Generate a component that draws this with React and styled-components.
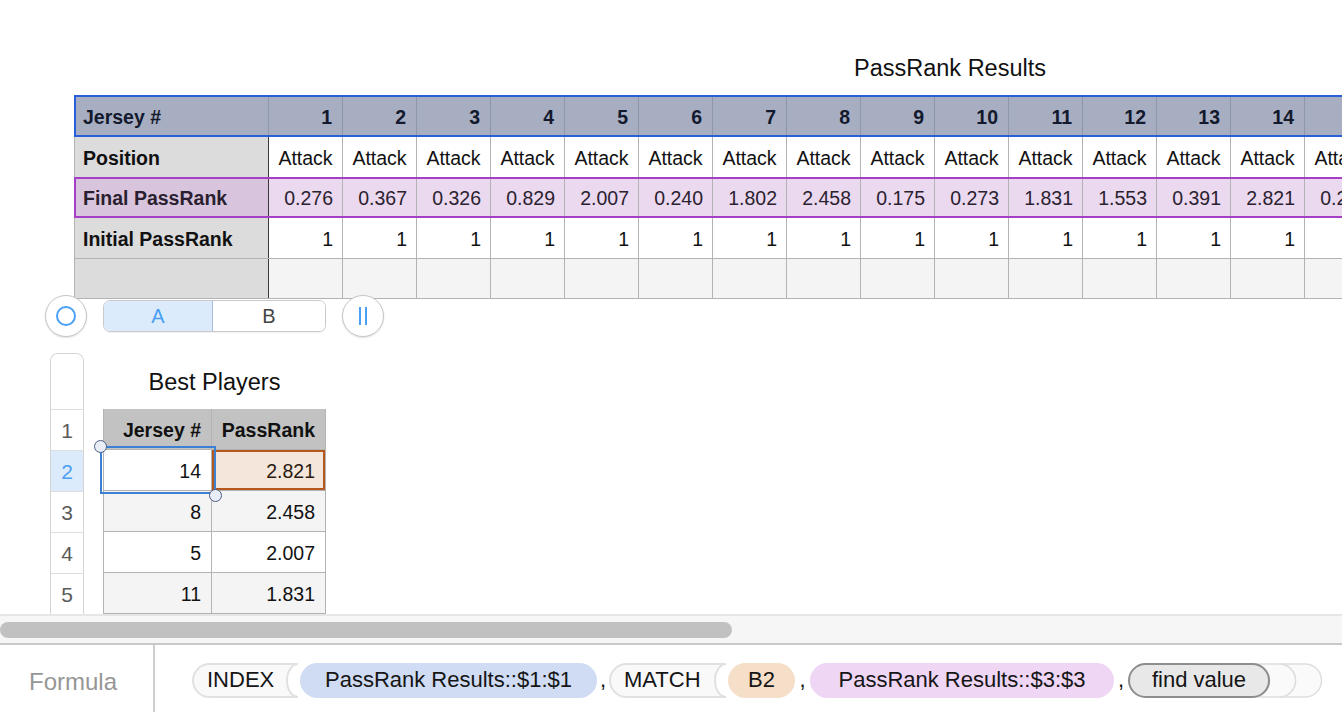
import React from "react";
import styled, { createGlobalStyle } from "styled-components";

const GlobalStyle = createGlobalStyle`
  html, body {
    margin: 0;
    padding: 0;
    background: #fff;
  }
  body {
    font-family: "Liberation Sans", Arial, sans-serif;
    color: #111;
    overflow: hidden;
  }
`;

const Page = styled.div`
  width: 1342px;
  height: 712px;
  display: flex;
  flex-direction: column;
  overflow: hidden;
`;

const Canvas = styled.div`
  height: 614px;
  flex-shrink: 0;
  overflow: hidden;
`;

const ResultsBlock = styled.section`
  padding: 52px 0 0 74px;
`;

const SheetTitle = styled.div`
  width: ${(p) => p.$w}px;
  height: ${(p) => p.$h}px;
  display: flex;
  align-items: center;
  justify-content: center;
  padding-top: ${(p) => p.$pt || 0}px;
  box-sizing: border-box;
  font-size: 23.5px;
  color: #111;
  white-space: nowrap;
`;

const Grid = styled.div`
  display: flex;
  flex-direction: column;
  width: max-content;
  margin-top: ${(p) => p.$mt || 0}px;
  border-left: 1px solid #b3b3b3;
`;

const Row = styled.div`
  display: flex;
  position: relative;
  box-sizing: border-box;
  height: ${(p) => p.$h}px;
  border-bottom: 1px solid ${(p) => p.$line || "#b3b3b3"};

  &::after {
    content: "";
    display: ${(p) => (p.$frame ? "block" : "none")};
    position: absolute;
    top: -1px;
    bottom: -1px;
    left: -1px;
    right: 0;
    border: 2px solid ${(p) => p.$frame};
    pointer-events: none;
    z-index: 3;
  }
`;

const Cell = styled.div`
  box-sizing: border-box;
  width: ${(p) => p.$w}px;
  flex-shrink: 0;
  display: flex;
  align-items: center;
  justify-content: ${(p) =>
    p.$align === "left" ? "flex-start" : p.$align === "center" ? "center" : "flex-end"};
  padding: 2px ${(p) => p.$pr ?? 9}px 0 8px;
  border-right: 1px solid ${(p) => p.$line || "#b3b3b3"};
  background: ${(p) => p.$bg || "#fff"};
  font-size: 19.5px;
  font-weight: ${(p) => (p.$bold ? 700 : 400)};
  color: ${(p) => p.$color || "#111"};
  white-space: nowrap;
  overflow: hidden;
`;

const SelectedCell = styled(Cell)`
  position: relative;
  overflow: visible;
  z-index: 2;
  outline: 2px solid #3c80d2;
  outline-offset: 2px;
`;

const LinkedCell = styled(Cell)`
  box-shadow: inset 0 0 0 2px #b5581d;
  background: #f5e6dc;
  color: #2a1a10;
`;

const Handle = styled.span`
  position: absolute;
  width: 13px;
  height: 13px;
  box-sizing: border-box;
  border-radius: 50%;
  background: #e9edf5;
  border: 1.5px solid #4b5c85;
  ${(p) =>
    p.$corner === "tl"
      ? "left: -10px; top: -10px;"
      : "right: -11px; bottom: -12px;"}
`;

const Controls = styled.div`
  display: flex;
  align-items: center;
  gap: 16px;
  height: 42px;
  margin-top: -4px;
  padding-left: 45px;
  position: relative;
  z-index: 4;
`;

const RoundButton = styled.div`
  width: 42px;
  height: 42px;
  box-sizing: border-box;
  border-radius: 50%;
  border: 1px solid #c6c6c6;
  background: #fff;
  box-shadow: 0 1px 2px rgba(0, 0, 0, 0.12);
  display: flex;
  align-items: center;
  justify-content: center;
  gap: 4px;
`;

const Ring = styled.span`
  width: 20px;
  height: 20px;
  box-sizing: border-box;
  border-radius: 50%;
  border: 2.5px solid #4aa0f5;
`;

const Bar = styled.span`
  width: 2px;
  height: 18px;
  background: #4aa0f5;
`;

const Segmented = styled.div`
  display: flex;
  width: 223px;
  height: 32px;
  box-sizing: border-box;
  border: 1px solid #cacaca;
  border-radius: 7px;
  overflow: hidden;
  box-shadow: 0 1px 1px rgba(0, 0, 0, 0.06);
`;

const Segment = styled.div`
  flex: ${(p) => (p.$active ? "0 0 108px" : "1")};
  display: flex;
  align-items: center;
  justify-content: center;
  font-size: 20px;
  background: ${(p) => (p.$active ? "#dcebfc" : "#fff")};
  color: ${(p) => (p.$active ? "#4a9ff5" : "#444")};
  border-right: ${(p) => (p.$active ? "1px solid #a8bdd8" : "none")};
`;

const Lower = styled.div`
  display: flex;
  align-items: flex-start;
  gap: 19px;
  margin-top: 16px;
  padding-left: 50px;
`;

const Gutter = styled.div`
  width: 34px;
  box-sizing: border-box;
  border: 1px solid #d4d4d4;
  border-bottom: none;
  border-radius: 8px 8px 0 0;
  overflow: hidden;
`;

const GutterCell = styled.div`
  height: ${(p) => p.$h}px;
  box-sizing: border-box;
  border-bottom: 1px solid #dedede;
  display: flex;
  align-items: center;
  justify-content: center;
  padding-top: 2px;
  font-size: 21px;
  color: ${(p) => (p.$active ? "#4a9ff5" : "#5a5a5a")};
  background: ${(p) => (p.$active ? "#dcebfc" : "#fff")};
`;

const BestBlock = styled.div`
  display: flex;
  flex-direction: column;
`;

const ScrollArea = styled.div`
  height: 31px;
  flex-shrink: 0;
  box-sizing: border-box;
  border-top: 2px solid #e6e6e6;
  border-bottom: 2px solid #c9c9c9;
  background: #f6f6f6;
  padding-top: 6px;
`;

const Thumb = styled.div`
  width: 732px;
  height: 16px;
  border-radius: 8px;
  background: #c1c1c1;
`;

const FormulaBar = styled.div`
  flex: 1;
  display: flex;
  background: #fff;
`;

const FormulaLabel = styled.div`
  width: 155px;
  box-sizing: border-box;
  border-right: 2px solid #cdcdcd;
  display: flex;
  align-items: center;
  padding: 6px 0 0 29px;
  font-size: 24px;
  color: #969696;
`;

const Tokens = styled.div`
  display: flex;
  align-items: center;
  padding: 3px 0 0 37px;
  font-size: 22px;
  color: #151515;
`;

const FuncToken = styled.span`
  display: inline-flex;
  align-items: center;
  margin-right: 2px;
`;

const FuncName = styled.span`
  box-sizing: border-box;
  height: 35px;
  width: ${(p) => p.$w}px;
  display: inline-flex;
  align-items: center;
  padding-left: 13px;
  background: #f9f9f9;
  border: 2px solid #e1e1e1;
  border-right: none;
  border-radius: 18px 0 0 18px;
`;

const Arg = styled.span`
  box-sizing: border-box;
  position: relative;
  z-index: 1;
  height: 35px;
  width: ${(p) => p.$w}px;
  display: inline-flex;
  align-items: center;
  justify-content: center;
  border-radius: 18px;
  background: ${(p) => p.$bg};
  border: ${(p) => (p.$border ? `2px solid ${p.$border}` : "none")};
  white-space: nowrap;
`;

const Comma = styled.span`
  width: ${(p) => p.$w}px;
  display: inline-flex;
  justify-content: center;
`;

const CloseParens = styled.svg`
  margin-left: -17px;
  position: relative;
  z-index: 0;
`;

const OpenParen = () => (
  <svg width="12" height="35" viewBox="0 0 12 35">
    <path
      d="M0 1 H12 A11 16.5 0 0 0 12 34 H0"
      fill="#f9f9f9"
      stroke="#e1e1e1"
      strokeWidth="2"
    />
  </svg>
);

const FIRST = 194;
const COL = 74;
const finals = [
  "0.276", "0.367", "0.326", "0.829", "2.007", "0.240", "1.802",
  "2.458", "0.175", "0.273", "1.831", "1.553", "0.391", "2.821", "0.249",
];
const cols = finals.map((_, i) => i + 1);

const best = [
  { jersey: 14, rank: "2.821" },
  { jersey: 8, rank: "2.458" },
  { jersey: 5, rank: "2.007" },
  { jersey: 11, rank: "1.831" },
];

function ResultsTable() {
  return (
    <Grid $mt={12}>
      <Row $h={41} $line="#8f97ab" $frame="#2b5fd9">
        <Cell $w={FIRST} $align="left" $bold $bg="#a7aec2" $color="#141a2e" $line="#8f97ab">
          Jersey #
        </Cell>
        {cols.map((c) => (
          <Cell key={c} $w={COL} $bold $bg="#a7aec2" $color="#141a2e" $line="#8f97ab" $pr={10}>
            {c}
          </Cell>
        ))}
      </Row>
      <Row $h={41}>
        <Cell $w={FIRST} $align="left" $bold $bg="#dcdcdc" $line="#3a3a3a">
          Position
        </Cell>
        {cols.map((c) => (
          <Cell key={c} $w={COL} $align="center" $pr={8}>
            Attack
          </Cell>
        ))}
      </Row>
      <Row $h={40} $frame="#a43fc6">
        <Cell $w={FIRST} $align="left" $bold $bg="#d8c5dd" $color="#2a1f30" $line="#3a3a3a">
          Final PassRank
        </Cell>
        {finals.map((v, i) => (
          <Cell key={i} $w={COL} $bg="#ebd9ef" $color="#2b2230">
            {v}
          </Cell>
        ))}
      </Row>
      <Row $h={41}>
        <Cell $w={FIRST} $align="left" $bold $bg="#dcdcdc" $line="#3a3a3a">
          Initial PassRank
        </Cell>
        {cols.map((c) => (
          <Cell key={c} $w={COL}>
            1
          </Cell>
        ))}
      </Row>
      <Row $h={40}>
        <Cell $w={FIRST} $bg="#dcdcdc" $line="#3a3a3a" />
        {cols.map((c) => (
          <Cell key={c} $w={COL} $bg="#f4f4f4" />
        ))}
      </Row>
    </Grid>
  );
}

function BestTable() {
  return (
    <Grid>
      <Row $h={41}>
        <Cell $w={108} $bold $bg="#c1c2c1" $pr={10}>
          Jersey #
        </Cell>
        <Cell $w={114} $bold $bg="#c1c2c1" $pr={10}>
          PassRank
        </Cell>
      </Row>
      {best.map((r, i) => {
        const bg = i % 2 ? "#f4f4f4" : "#fff";
        return (
          <Row key={r.jersey} $h={41}>
            {i === 0 ? (
              <SelectedCell $w={108} $pr={10}>
                {r.jersey}
                <Handle $corner="tl" />
                <Handle $corner="br" />
              </SelectedCell>
            ) : (
              <Cell $w={108} $bg={bg} $pr={10}>
                {r.jersey}
              </Cell>
            )}
            {i === 0 ? (
              <LinkedCell $w={114} $pr={10}>
                {r.rank}
              </LinkedCell>
            ) : (
              <Cell $w={114} $bg={bg} $pr={10}>
                {r.rank}
              </Cell>
            )}
          </Row>
        );
      })}
    </Grid>
  );
}

export default function App() {
  return (
    <Page>
      <GlobalStyle />
      <Canvas>
        <ResultsBlock>
          <SheetTitle $w={1752} $h={32}>PassRank Results</SheetTitle>
          <ResultsTable />
        </ResultsBlock>

        <Controls>
          <RoundButton>
            <Ring />
          </RoundButton>
          <Segmented>
            <Segment $active>A</Segment>
            <Segment>B</Segment>
          </Segmented>
          <RoundButton>
            <Bar />
            <Bar />
          </RoundButton>
        </Controls>

        <Lower>
          <Gutter>
            <GutterCell $h={56} />
            {[1, 2, 3, 4, 5].map((n) => (
              <GutterCell key={n} $h={41} $active={n === 2}>
                {n}
              </GutterCell>
            ))}
          </Gutter>
          <BestBlock>
            <SheetTitle $w={223} $h={56} $pt={2}>Best Players</SheetTitle>
            <BestTable />
          </BestBlock>
        </Lower>
      </Canvas>

      <ScrollArea>
        <Thumb />
      </ScrollArea>

      <FormulaBar>
        <FormulaLabel>Formula</FormulaLabel>
        <Tokens>
          <FuncToken>
            <FuncName $w={94}>INDEX</FuncName>
            <OpenParen />
          </FuncToken>
          <Arg $w={297} $bg="#cfdcf3">PassRank Results::$1:$1</Arg>
          <Comma $w={12}>,</Comma>
          <FuncToken>
            <FuncName $w={105}>MATCH</FuncName>
            <OpenParen />
          </FuncToken>
          <Arg $w={67} $bg="#f6dfc9">B2</Arg>
          <Comma $w={15}>,</Comma>
          <Arg $w={304} $bg="#eed6f4">PassRank Results::$3:$3</Arg>
          <Comma $w={14}>,</Comma>
          <Arg $w={142} $bg="#e8e8e8" $border="#8d8d8d">find value</Arg>
          <CloseParens width="72" height="35" viewBox="0 0 72 35">
            <path
              d="M26 1 H52 A16.5 16.5 0 0 1 52 34 H26 A16.5 16.5 0 0 0 26 1 Z"
              fill="#fafafa"
              stroke="#dedede"
              strokeWidth="1.5"
            />
            <path
              d="M0 1 H26 A16.5 16.5 0 0 1 26 34 H0 A16.5 16.5 0 0 0 0 1 Z"
              fill="#fafafa"
              stroke="#dedede"
              strokeWidth="1.5"
            />
          </CloseParens>
        </Tokens>
      </FormulaBar>
    </Page>
  );
}
